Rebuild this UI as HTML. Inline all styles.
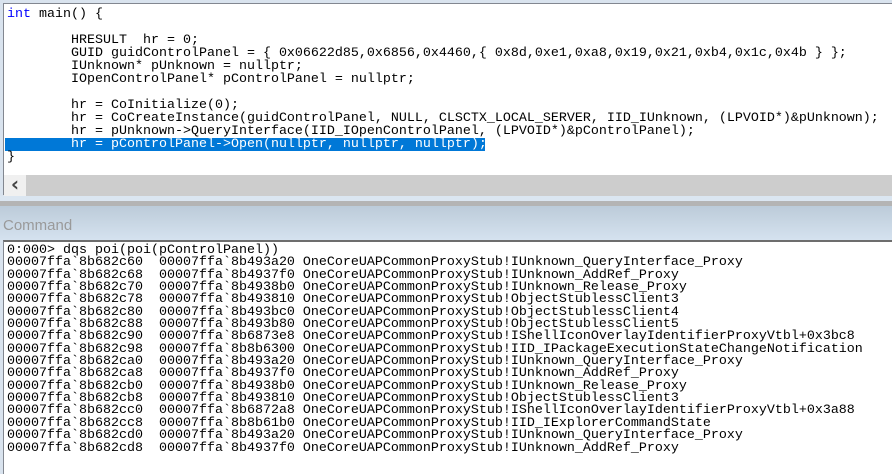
<!DOCTYPE html>
<html><head><meta charset="utf-8"><style>
html,body{margin:0;padding:0;}
body{width:892px;height:474px;overflow:hidden;background:#d9e3ee;position:relative;font-family:"Liberation Mono",monospace;}
.ed{position:absolute;left:3px;top:3px;width:889px;height:192px;background:#fff;border-left:1px solid #828790;border-top:1px solid #828790;box-sizing:border-box;}
pre{margin:0;font-family:"Liberation Mono",monospace;font-size:13.33px;white-space:pre;color:#000;}
.code{position:absolute;left:3px;top:4px;line-height:13px;}
.sel{position:absolute;left:1px;top:134px;width:480px;height:13px;background:#0078d7;}
.sb{position:absolute;left:0;top:171px;width:889px;height:21px;background:#cdcdcd;}
.sba{position:absolute;left:0;top:0;width:22px;height:21px;background:#f0f0f0;color:#444;font:bold 20px "DejaVu Sans",sans-serif;text-align:center;line-height:19px;}
.gap{position:absolute;left:0;top:196px;width:892px;height:5px;background:#dbe6f1;}
.gl{position:absolute;left:0;top:201px;width:892px;height:5px;background:#b4b4b4;}
.hdr{position:absolute;left:0;top:206px;width:892px;height:34px;background:linear-gradient(#bccbd9,#d5e2ef);}
.hdr span{position:absolute;left:3px;top:11px;font:15px "Liberation Sans",sans-serif;color:#9a9a9a;}
.cmd{position:absolute;left:3px;top:240px;width:889px;height:234px;background:#fff;border-left:1px solid #828790;border-top:2px solid #6d6d6d;box-sizing:border-box;}
.out{position:absolute;left:3px;top:3px;line-height:12.35px;}
</style></head><body>
<div class="ed">
<div class="sel"></div>
<pre class="code"><span style="color:#0000ff">int</span> main() {

        HRESULT  hr = 0;
        GUID guidControlPanel = { 0x06622d85,0x6856,0x4460,{ 0x8d,0xe1,0xa8,0x19,0x21,0xb4,0x1c,0x4b } };
        IUnknown* pUnknown = nullptr;
        IOpenControlPanel* pControlPanel = nullptr;

        hr = CoInitialize(0);
        hr = CoCreateInstance(guidControlPanel, NULL, CLSCTX_LOCAL_SERVER, IID_IUnknown, (LPVOID*)&amp;pUnknown);
        hr = pUnknown-&gt;QueryInterface(IID_IOpenControlPanel, (LPVOID*)&amp;pControlPanel);
<span style="color:#fff">        hr = pControlPanel-&gt;Open(nullptr, nullptr, nullptr);</span>
}</pre>
<div class="sb"><div class="sba">‹</div></div>
</div>
<div class="gap"></div><div class="gl"></div>
<div class="hdr"><span>Command</span></div>
<div class="cmd"><pre class="out">0:000&gt; dqs poi(poi(pControlPanel))
00007ffa`8b682c60  00007ffa`8b493a20 OneCoreUAPCommonProxyStub!IUnknown_QueryInterface_Proxy
00007ffa`8b682c68  00007ffa`8b4937f0 OneCoreUAPCommonProxyStub!IUnknown_AddRef_Proxy
00007ffa`8b682c70  00007ffa`8b4938b0 OneCoreUAPCommonProxyStub!IUnknown_Release_Proxy
00007ffa`8b682c78  00007ffa`8b493810 OneCoreUAPCommonProxyStub!ObjectStublessClient3
00007ffa`8b682c80  00007ffa`8b493bc0 OneCoreUAPCommonProxyStub!ObjectStublessClient4
00007ffa`8b682c88  00007ffa`8b493b80 OneCoreUAPCommonProxyStub!ObjectStublessClient5
00007ffa`8b682c90  00007ffa`8b6873e8 OneCoreUAPCommonProxyStub!IShellIconOverlayIdentifierProxyVtbl+0x3bc8
00007ffa`8b682c98  00007ffa`8b8b6300 OneCoreUAPCommonProxyStub!IID_IPackageExecutionStateChangeNotification
00007ffa`8b682ca0  00007ffa`8b493a20 OneCoreUAPCommonProxyStub!IUnknown_QueryInterface_Proxy
00007ffa`8b682ca8  00007ffa`8b4937f0 OneCoreUAPCommonProxyStub!IUnknown_AddRef_Proxy
00007ffa`8b682cb0  00007ffa`8b4938b0 OneCoreUAPCommonProxyStub!IUnknown_Release_Proxy
00007ffa`8b682cb8  00007ffa`8b493810 OneCoreUAPCommonProxyStub!ObjectStublessClient3
00007ffa`8b682cc0  00007ffa`8b6872a8 OneCoreUAPCommonProxyStub!IShellIconOverlayIdentifierProxyVtbl+0x3a88
00007ffa`8b682cc8  00007ffa`8b8b61b0 OneCoreUAPCommonProxyStub!IID_IExplorerCommandState
00007ffa`8b682cd0  00007ffa`8b493a20 OneCoreUAPCommonProxyStub!IUnknown_QueryInterface_Proxy
00007ffa`8b682cd8  00007ffa`8b4937f0 OneCoreUAPCommonProxyStub!IUnknown_AddRef_Proxy</pre></div>
</body></html>
